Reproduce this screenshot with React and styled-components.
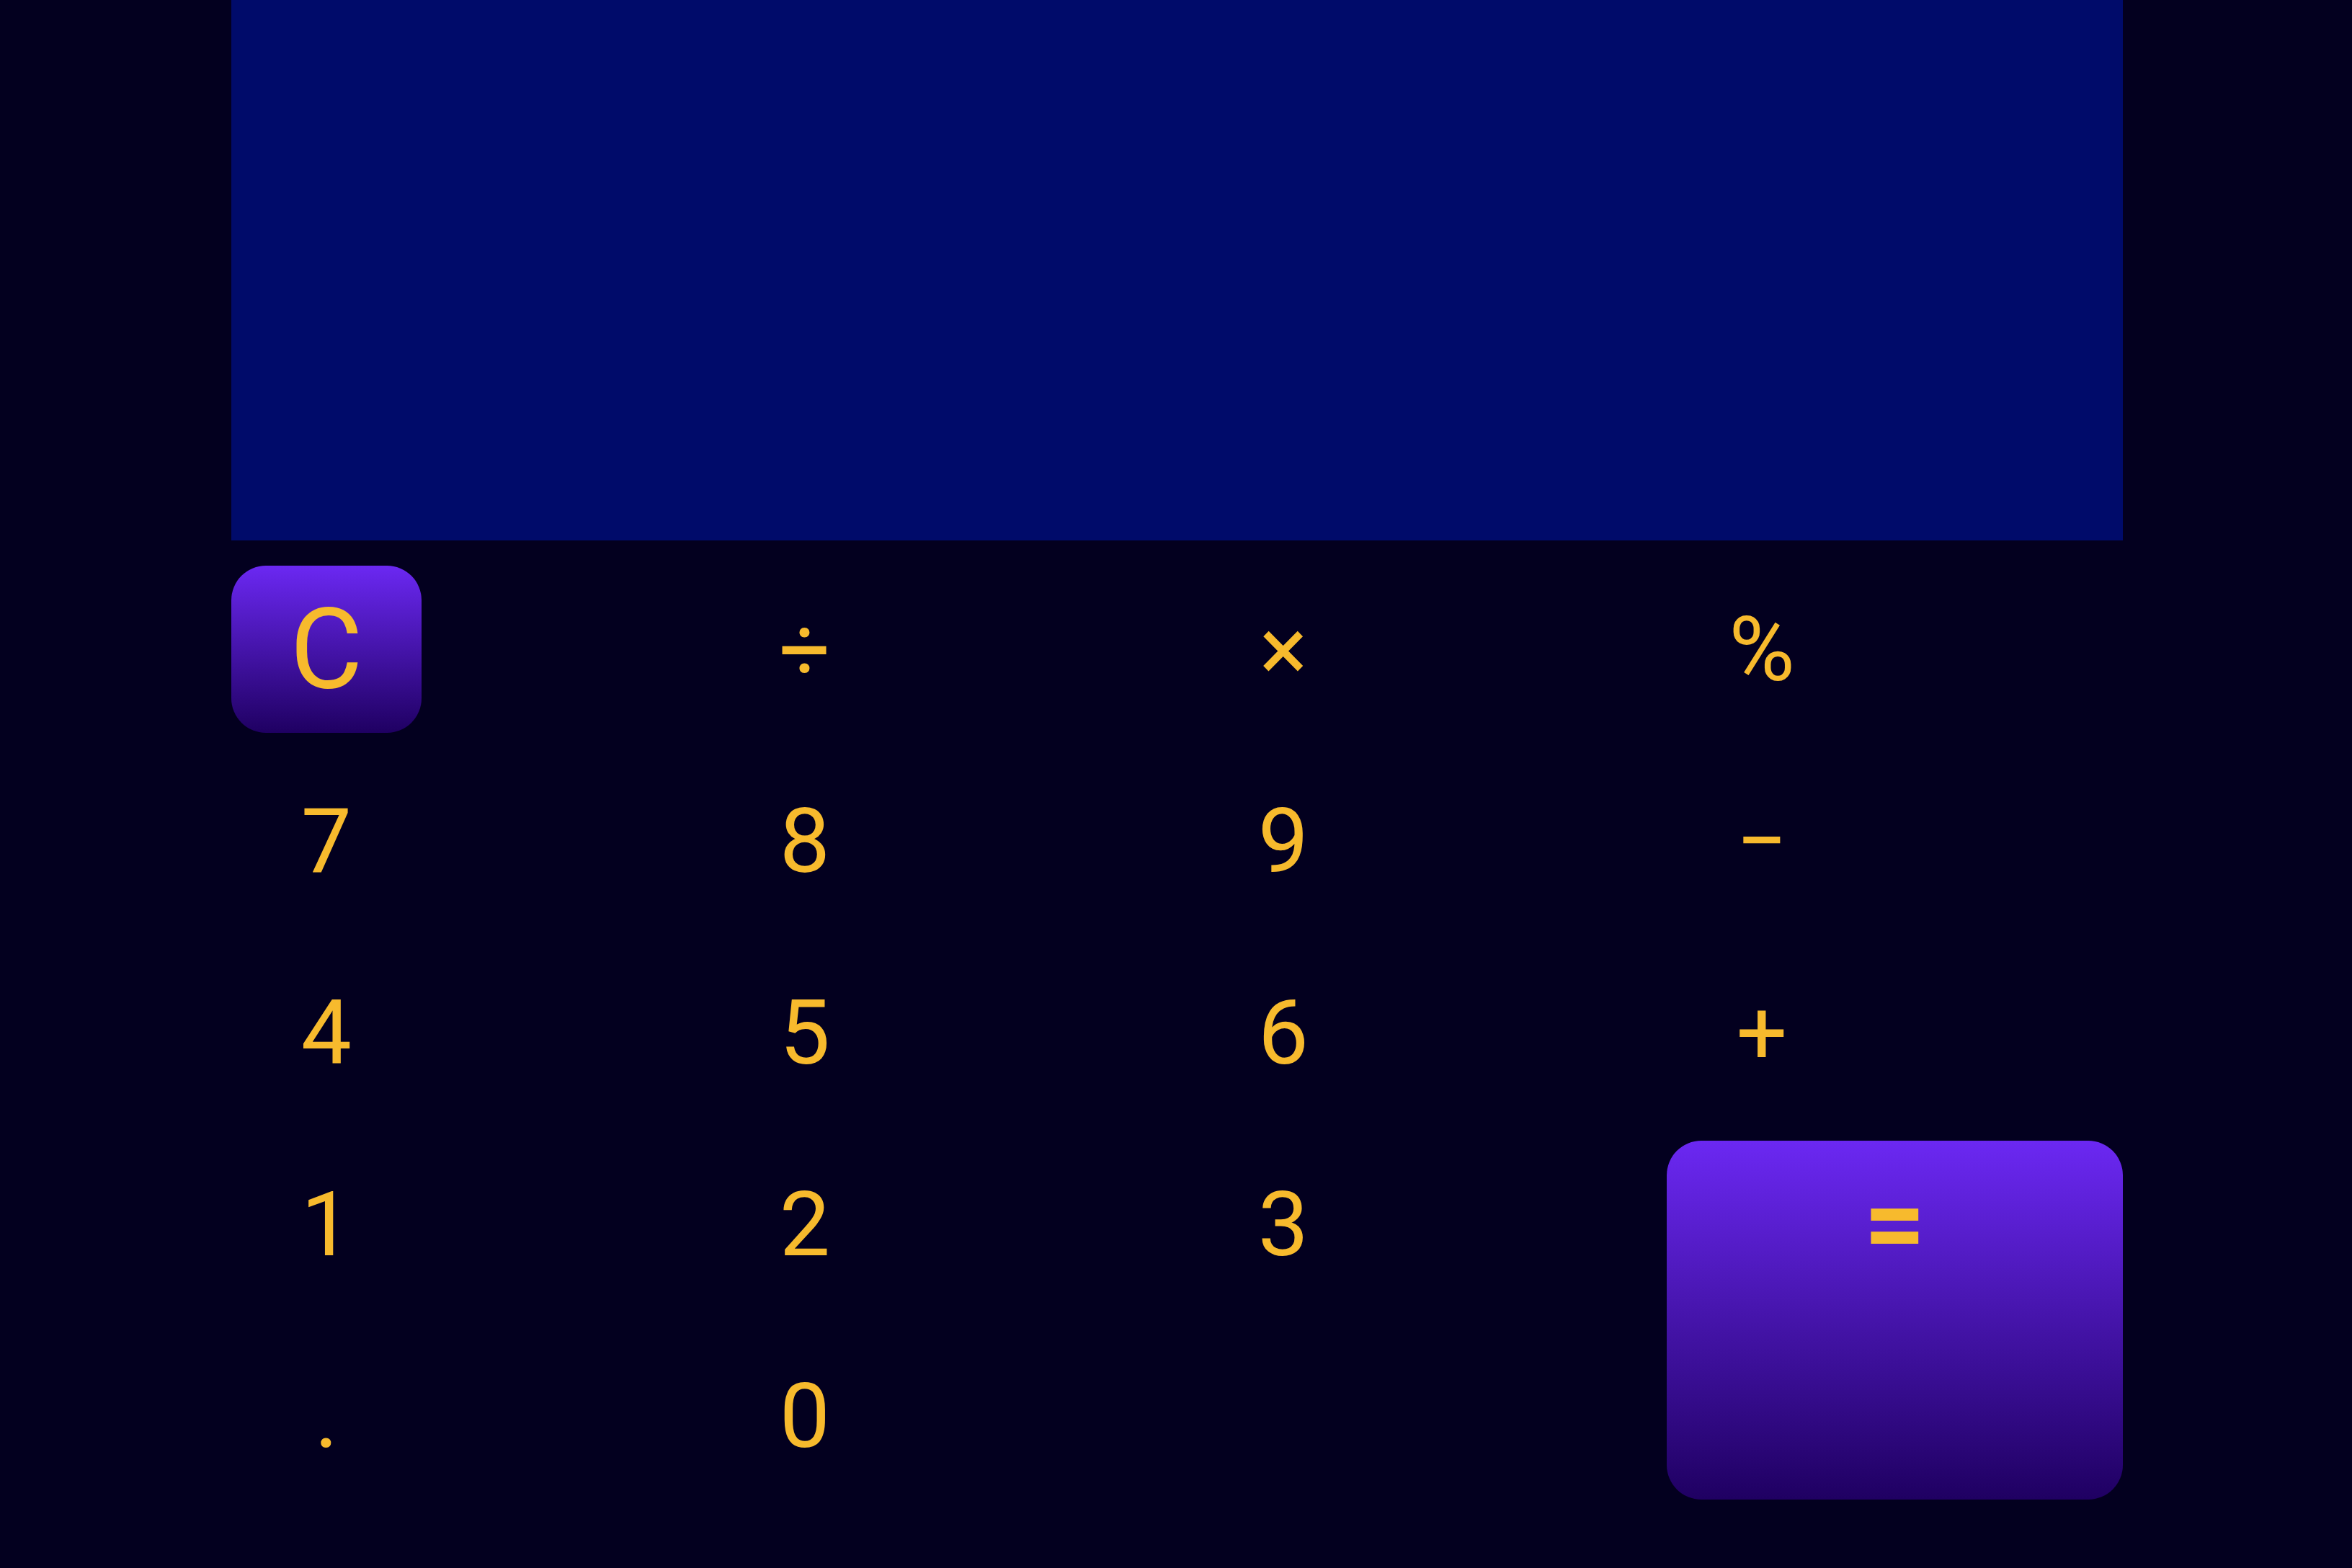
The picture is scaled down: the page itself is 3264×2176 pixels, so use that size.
import React from "react";
import styled, { createGlobalStyle } from "styled-components";

const GlobalStyle = createGlobalStyle`
  html, body {
    margin: 0;
    padding: 0;
    background-color: #03001f;
  }
  body {
    font-family: Roboto, "Noto Sans", sans-serif;
  }
`;

const Screen = styled.div`
  width: 3264px;
  height: 2176px;
  background-color: #03001f;
  padding-left: 321px;
  box-sizing: border-box;
  overflow: hidden;
`;

const Calculator = styled.div`
  width: 2625px;
  display: flex;
  flex-direction: column;
  gap: 35px;
`;

const Display = styled.div`
  height: 750px;
  background-color: #000b6a;
`;

const Keypad = styled.div`
  display: grid;
  grid-template-columns: repeat(4, 633px);
  grid-auto-rows: 232px;
  column-gap: 31px;
  row-gap: 34px;
`;

const Key = styled.button`
  width: 264px;
  height: 232px;
  border: none;
  outline: none;
  padding: 0;
  margin: 0;
  border-radius: 48px;
  background: ${({ $filled }) =>
    $filled ? "linear-gradient(180deg, #6b28f2 0%, #1f0062 100%)" : "transparent"};
  color: #f7ba2d;
  font-family: Roboto, "Noto Sans", sans-serif;
  font-size: ${({ $size }) => $size || 125}px;
  font-weight: 400;
  line-height: 1;
  display: flex;
  align-items: center;
  justify-content: center;
  justify-self: start;
`;

const EqualsKey = styled(Key)`
  width: 100%;
  height: 100%;
  grid-row: span 2;
  align-items: flex-start;
  padding-top: 41px;
  box-sizing: border-box;
  font-weight: 700;
`;

const Spacer = styled.div``;

const rows = [
  [{ label: "C", filled: true, size: 155 }, { label: "÷" }, { label: "×" }, { label: "%" }],
  [{ label: "7" }, { label: "8" }, { label: "9" }, { label: "−" }],
  [{ label: "4" }, { label: "5" }, { label: "6" }, { label: "+" }],
];

const App = () => {
  return (
    <>
      <GlobalStyle />
      <Screen>
        <Calculator>
          <Display />
          <Keypad>
            {rows.flat().map(({ label, filled, size }) => (
              <Key key={label} $filled={filled} $size={size}>
                {label}
              </Key>
            ))}
            <Key>1</Key>
            <Key>2</Key>
            <Key>3</Key>
            <EqualsKey $filled $size={150}>=</EqualsKey>
            <Key>.</Key>
            <Key>0</Key>
            <Spacer />
          </Keypad>
        </Calculator>
      </Screen>
    </>
  );
};

export default App;
